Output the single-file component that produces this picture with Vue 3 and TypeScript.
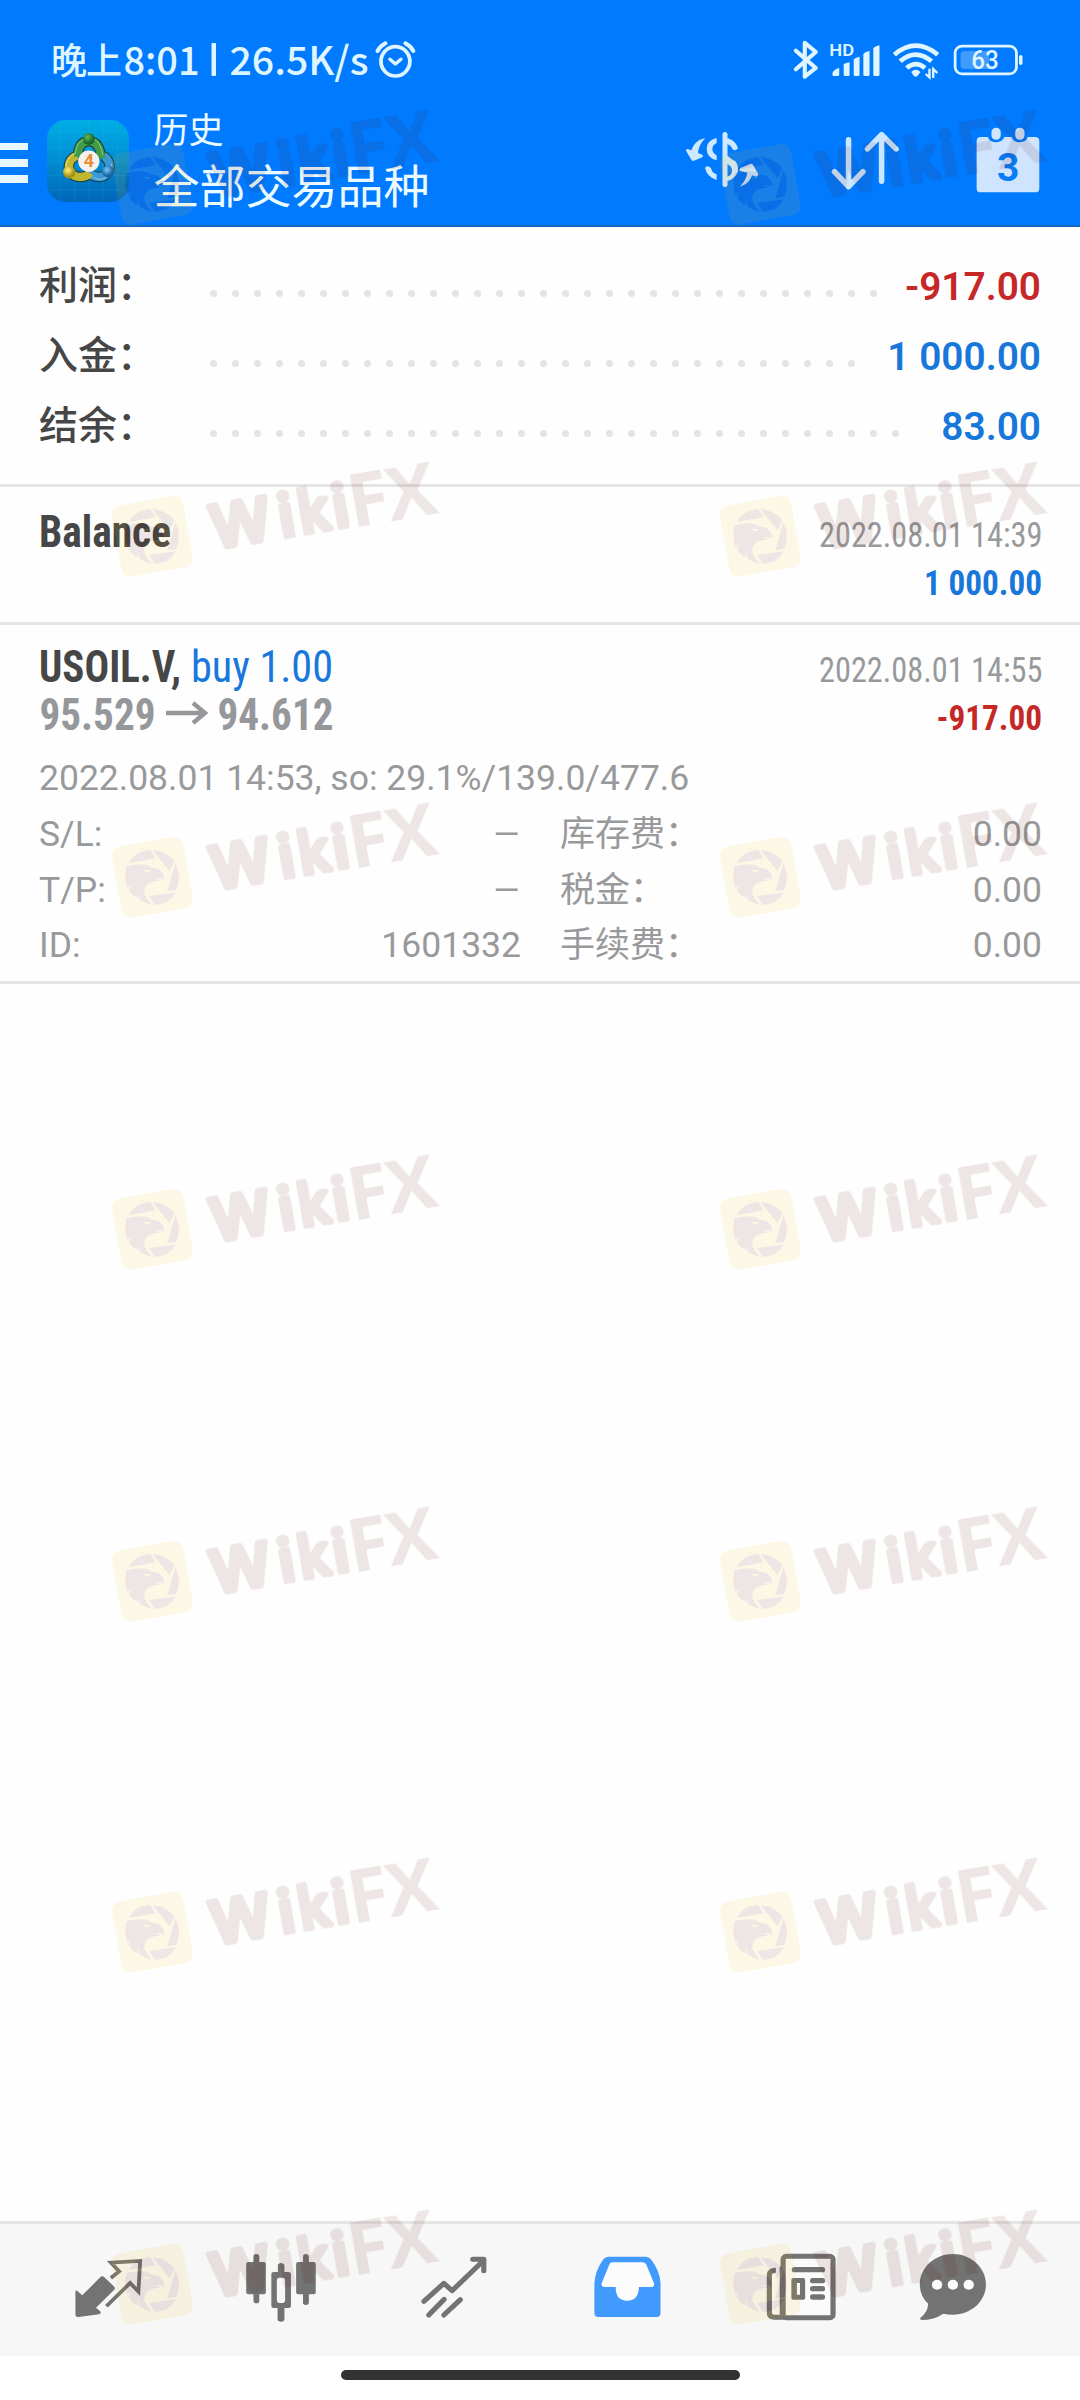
<script setup lang="ts">
interface SummaryRow { label: string; value: string; tone: 'red' | 'blue'; dots: number }
interface DetailRow { left: string; leftValue: string; right: string; rightValue: string }

const summary: SummaryRow[] = [
  { label: '利润：', value: '-917.00', tone: 'red', dots: 31 },
  { label: '入金：', value: '1 000.00', tone: 'blue', dots: 30 },
  { label: '结余：', value: '83.00', tone: 'blue', dots: 32 },
]

const details: DetailRow[] = [
  { left: 'S/L:', leftValue: '–', right: '库存费：', rightValue: '0.00' },
  { left: 'T/P:', leftValue: '–', right: '税金：', rightValue: '0.00' },
  { left: 'ID:', leftValue: '1601332', right: '手续费：', rightValue: '0.00' },
]

const markTops = [95.3, 447, 788, 1140, 1491.5, 1843, 2195]
const marks = markTops.flatMap((top) => [{ top, left: 100 }, { top, left: 708 }])
</script>

<template>
  <div class="screen">
    <header class="header">
      <div class="status">
        <svg class="clock" width="320" height="80" viewBox="0 0 320 80">
          <text x="0" y="73.5" class="cjk" textLength="71">晚上</text>
          <text x="72.500" y="74.500" class="lat" textLength="76" lengthAdjust="spacingAndGlyphs">8:01</text>
          <rect x="160.500" y="43" width="4.500" height="33" rx="1" />
          <text x="178.500" y="74.500" class="lat" textLength="139" lengthAdjust="spacingAndGlyphs">26.5K/s</text>
        </svg>
        <svg class="alarm" width="46" height="80" viewBox="1080 0 133.600 240" preserveAspectRatio="none" fill="none" stroke="#dff5ff" stroke-linecap="round">
          <ellipse cx="1148" cy="184" rx="42" ry="44" stroke-width="11" />
          <path d="M1132 178L1148 192L1164 178" stroke-width="10" stroke-linejoin="round" />
          <path d="M1096 153Q1104 138 1119 130M1200 153Q1192 138 1177 130" stroke-width="12" />
        </svg>
        <div class="indicators">
          <svg width="32" height="80" viewBox="726 0 93 240" preserveAspectRatio="none" fill="none" stroke="#dff5ff" stroke-width="12" stroke-linecap="round" stroke-linejoin="round">
            <path d="M743 152L801 204L769 230V128L801 156L743 208" />
          </svg>
          <svg width="54" height="80" viewBox="836.400 0 156.800 240" preserveAspectRatio="none" fill="#dff5ff">
            <text x="840" y="168" font-size="47" font-weight="600" class="hd" textLength="72" lengthAdjust="spacingAndGlyphs">HD</text>
            <path d="M849 224Q849 209 869 204V224Q869 228 865 228H853Q849 228 849 224ZM882 193Q888 189 899 187V224Q899 228 895 228H886Q882 228 882 224ZM911 178Q917 172 928 170V224Q928 228 924 228H915Q911 228 911 224ZM939 162Q945 155 957 153V224Q957 228 953 228H943Q939 228 939 224ZM968 144Q974 138 986 136V224Q986 228 982 228H972Q968 228 968 224Z" />
          </svg>
          <svg width="52" height="80" viewBox="1016.400 0 151 240" preserveAspectRatio="none" fill="none" stroke="#dff5ff" stroke-width="14">
            <path d="M1029 164Q1091 110 1155 164M1046 184Q1091 144 1137 184M1065 204Q1091 181 1118 204" />
            <path d="M1078 216Q1091 203 1105 216L1096 228Q1091 233 1086 228Z" fill="#dff5ff" stroke="none" />
            <path d="M1131 206V232L1120 222M1142 234V207L1154 219" stroke-width="7" />
          </svg>
          <svg width="72" height="80" viewBox="1196.400 0 209 240" preserveAspectRatio="none">
            <path d="M1234 153H1304V207H1234Q1221 207 1221 194V166Q1221 153 1234 153Z" fill="#409bff" />
            <rect x="1205.500" y="138.500" width="178" height="83" rx="20" fill="none" stroke="#dff5ff" stroke-width="8" />
            <rect x="1391" y="165" width="10" height="30" rx="5" fill="#dff5ff" />
            <text x="1252" y="208" font-size="76" font-weight="500" fill="#dff5ff" class="hd" textLength="80" lengthAdjust="spacingAndGlyphs">63</text>
          </svg>
        </div>
      </div>

      <div class="bar">
        <div class="menu"><i></i><i></i><i></i></div>
        <svg class="logo" width="82" height="82" viewBox="20 30 247 247" preserveAspectRatio="none">
          <defs>
            <linearGradient id="tile" x1="0" y1="0" x2="0" y2="1">
              <stop offset="0" stop-color="#00aee6" /><stop offset=".45" stop-color="#0090d4" /><stop offset="1" stop-color="#0065b8" />
            </linearGradient>
            <radialGradient id="gr" cx=".4" cy=".35"><stop offset="0" stop-color="#68b85c" /><stop offset="1" stop-color="#176a2c" /></radialGradient>
            <radialGradient id="ye" cx=".4" cy=".35"><stop offset="0" stop-color="#fff27a" /><stop offset="1" stop-color="#a79313" /></radialGradient>
            <radialGradient id="bl" cx=".4" cy=".35"><stop offset="0" stop-color="#7cc8ef" /><stop offset="1" stop-color="#1866a8" /></radialGradient>
          </defs>
          <rect x="20" y="30" width="247" height="247" rx="56" fill="url(#tile)" />
          <path d="M60 31V276M103 31V276M146 31V276M189 31V276M232 31V276M21 68H266M21 112H266M21 155H266M21 198H266M21 241H266" stroke="#5cc4f0" stroke-opacity=".2" stroke-width="2" />
          <g fill="none" stroke-width="31" stroke="#123c3c">
            <path d="M190 138C212 152 212 178 202 190C188 208 160 204 138 186" />
            <path d="M112 138C86 144 80 172 91 188C104 206 136 206 150 190" />
            <path d="M114 140C112 112 124 94 146 94S182 112 182 146" />
          </g>
          <g fill="none" stroke-width="25">
            <path d="M190 138C212 152 212 178 202 190C188 208 160 204 138 186" stroke="#3b98d3" />
            <path d="M112 138C86 144 80 172 91 188C104 206 136 206 150 190" stroke="#c0b62f" />
            <path d="M114 140C112 112 124 94 146 94S182 112 182 146" stroke="#429b45" />
          </g>
          <g fill="none" stroke-width="3" stroke-opacity=".75">
            <path d="M105 132C108 102 122 88 146 86S182 102 188 136" stroke="#a5d9a0" />
            <path d="M104 132C76 144 72 174 84 194" stroke="#f3ecaa" />
            <path d="M214 162Q216 184 200 200T160 203" stroke="#a8dcfa" />
          </g>
          <circle cx="146" cy="87" r="18" fill="url(#gr)" />
          <circle cx="87" cy="187" r="19" fill="url(#ye)" />
          <circle cx="204" cy="185" r="18" fill="url(#bl)" />
          <circle cx="146" cy="154" r="32" fill="#f4f1ee" />
          <text x="146" y="173" text-anchor="middle" font-size="54" font-weight="700" fill="#f08a35" class="hd">4</text>
        </svg>
        <div class="titles">
          <div class="sub">历史</div>
          <div class="title">全部交易品种</div>
        </div>
        <div class="actions">
          <svg width="90" height="80" viewBox="0 0 270 240" fill="#cde8ff">
            <path d="M76 55C62 68 56 84 54 99L68 105Q70 109 67 112L40 123Q36 123 34 119L18 92Q18 86 22 87L34 91C42 70 56 57 76 55Z" />
            <path d="M110 54V69Q97 75 97 87T110 106V121Q80 113 80 87T110 54ZM75 143Q83 134 93 144Q95 158 110 163V180Q80 170 75 143Z" />
            <rect x="127.500" y="36" width="15" height="165" rx="7" />
            <path d="M140 54C158 58 170 70 174 85Q166 96 157 87Q153 75 140 72ZM140 106Q154 118 166 124Q175 135 174 153Q166 177 140 184V170Q156 167 156 152T140 132Z" />
            <path d="M179 200C192 188 200 173 202 158L181 153Q176 148 181 144L213 131Q217 131 219 134L235 163Q234 170 229 170L216 166C210 184 198 195 179 200Z" />
          </svg>
          <svg width="100" height="80" viewBox="813.100 360 290.400 240" preserveAspectRatio="none" fill="none" stroke="#cde6ff" stroke-width="16" stroke-linecap="round" stroke-linejoin="round">
            <path d="M896 419V560M855 515L896 560L938 515M992 544V404M951 447L992 404L1034 447" />
          </svg>
          <svg width="80" height="80" viewBox="1234.200 360 232.300 240" preserveAspectRatio="none" fill="#cfe4ff">
            <path d="M1280 411H1301Q1303 426 1324 427Q1344 426 1348 411H1370Q1373 426 1393 427Q1414 426 1416 411H1438Q1450 411 1450 423V566Q1450 577 1438 577H1280Q1268 577 1268 566V423Q1268 411 1280 411Z" />
            <rect x="1311" y="383" width="27" height="36" rx="13" /><rect x="1380" y="383" width="27" height="36" rx="13" />
            <text x="1327" y="542" textLength="65" lengthAdjust="spacingAndGlyphs" font-size="119" font-weight="700" fill="#087cf5" class="hd">3</text>
          </svg>
        </div>
      </div>
    </header>

    <section class="summary">
      <div v-for="row in summary" :key="row.label" class="sum-row">
        <span class="sum-label">{{ row.label }}</span>
        <span class="dots"><i v-for="n in row.dots" :key="n"></i></span>
        <span class="sum-value" :class="row.tone">{{ row.value }}</span>
      </div>
    </section>

    <section class="entry first">
      <div class="lines">
        <svg class="cond" width="300" height="48"><text x="-1" y="38" font-size="43.500" font-weight="700" fill="#464646" textLength="132" lengthAdjust="spacingAndGlyphs">Balance</text></svg>
        <svg class="cond" width="240" height="48"><text x="19" y="37.500" font-size="35.500" fill="#98999b" textLength="223.500" lengthAdjust="spacingAndGlyphs">2022.08.01 14:39</text></svg>
      </div>
      <div class="lines end">
        <svg class="cond" width="240" height="48"><text x="124" y="38" font-size="35.500" font-weight="700" fill="#1877db" textLength="118" lengthAdjust="spacingAndGlyphs">1 000.00</text></svg>
      </div>
    </section>

    <section class="entry deal">
      <div class="lines">
        <svg class="cond" width="320" height="48">
          <text x="-1" y="38" font-size="43.500" font-weight="700" fill="#464646" textLength="142" lengthAdjust="spacingAndGlyphs">USOIL.V,</text>
          <text x="151" y="38" font-size="43.500" fill="#1877db" textLength="142" lengthAdjust="spacingAndGlyphs">buy 1.00</text>
        </svg>
        <svg class="cond" width="240" height="48"><text x="19" y="37.500" font-size="35.500" fill="#98999b" textLength="223.500" lengthAdjust="spacingAndGlyphs">2022.08.01 14:55</text></svg>
      </div>
      <div class="lines">
        <svg class="cond" width="320" height="48">
          <text x="-0.500" y="38" font-size="43.500" font-weight="700" fill="#96979a" textLength="116" lengthAdjust="spacingAndGlyphs">95.529</text>
          <path d="M126 21H165M153 11L165 21L153 31" fill="none" stroke="#96979a" stroke-width="4.300" />
          <text x="177.500" y="38" font-size="43.500" font-weight="700" fill="#96979a" textLength="116" lengthAdjust="spacingAndGlyphs">94.612</text>
        </svg>
        <svg class="cond" width="240" height="48"><text x="136.500" y="38" font-size="35.500" font-weight="700" fill="#c62828" textLength="105.500" lengthAdjust="spacingAndGlyphs">-917.00</text></svg>
      </div>
      <div class="comment">2022.08.01 14:53, so: 29.1%/139.0/477.6</div>
      <div v-for="d in details" :key="d.left" class="detail">
        <div class="cell left"><span>{{ d.left }}</span><span :class="{ dash: d.leftValue === '–' }">{{ d.leftValue }}</span></div>
        <div class="cell right"><span class="cn">{{ d.right }}</span><span>{{ d.rightValue }}</span></div>
      </div>
    </section>

    <nav class="nav">
      <svg viewBox="139.400 72 348.500 396" preserveAspectRatio="none" fill="#737373">
        <path d="M219 273Q221 269 228 276L239 286L291 232Q297 226 303 232L332 260Q336 265 331 270L279 323L291 334Q295 342 287 343L229 351Q219 352 219 345Z" />
        <path d="M322 234L346 214L322 188L407 183L402 275L378 249L309 319" fill="none" stroke="#737373" stroke-width="11" />
      </svg>
      <svg viewBox="641.800 72 348.500 396" preserveAspectRatio="none" fill="#737373">
        <path d="M736 186V170Q736 162 744.500 162T753 170V186H766Q772 186 772 192V277Q772 283 766 283H753V302Q753 310 744.500 310T736 302V283H722Q715 283 715 277V192Q715 186 722 186ZM880 186V170Q880 162 888 162T897 170V186H911Q917 186 917 192V277Q917 283 911 283H897V307Q897 315 888 315T880 307V283H866Q860 283 860 277V192Q860 186 866 186Z" />
        <path fill-rule="evenodd" d="M807 216V197Q807 189 816 189T826 197V216H838Q845 216 845 222V318Q845 324 838 324H826V357Q826 365 816 365T806 357V324H795Q788 324 788 318V222Q788 216 795 216ZM810 233Q804 233 804 241V301Q804 309 810 309H822Q828 309 828 301V241Q828 233 822 233Z" />
      </svg>
      <svg viewBox="1144.200 72 348.500 396" preserveAspectRatio="none" fill="none" stroke="#737373" stroke-width="15" stroke-linecap="round">
        <path d="M1231 304L1289 250L1313 272L1405 181M1373 178H1405V212" stroke-linejoin="round" />
        <path d="M1245 345L1290 298M1289 345L1337 299" stroke-width="15" />
      </svg>
      <svg viewBox="78.400 72 348.500 396" preserveAspectRatio="none">
        <path fill="#419bfe" d="M158 250Q160 212 184 178Q189 170 199 170H307Q317 170 322 178Q348 212 350 250V339Q350 351 338 351H170Q158 351 158 339Z" />
        <path fill="#fcfcfc" d="M201 194Q203 187 212 187H296Q306 187 309 194L331 250Q333 261 323 261H287Q287 302 253 302T220 261H188Q177 261 179 250Z" />
      </svg>
      <svg viewBox="580.800 72 348.500 396" preserveAspectRatio="none">
        <rect x="706" y="169" width="145" height="184" rx="9" fill="#fbfbfb" stroke="#737373" stroke-width="15" />
        <path d="M666 352V228Q666 211 684 211V352Z" fill="#fbfbfb" />
        <path d="M685 211Q666 211 666 226V337Q666 352 681 352H709" fill="none" stroke="#737373" stroke-width="15" />
        <path d="M698 200V344" stroke="#737373" stroke-width="4" />
        <path d="M739 209H820M792 242H820M792 266H820M792 291H820" stroke="#737373" stroke-width="16" stroke-linecap="round" />
        <path fill="#737373" fill-rule="evenodd" d="M735 234H765Q770 234 770 240V294Q770 299 765 299H735Q730 299 730 294V240Q730 234 735 234ZM746 249V284H755V249Z" />
      </svg>
      <svg viewBox="1083.200 72 348.500 396" preserveAspectRatio="none">
        <path fill="#737373" d="M1199 162C1252 162 1295 203 1295 253C1295 304 1252 344 1199 344Q1184 344 1171 341Q1144 360 1108 360Q1102 359 1105 353Q1127 335 1127 311Q1103 288 1103 253C1103 203 1146 162 1199 162Z" />
        <g fill="#fbfbfb"><circle cx="1153" cy="254" r="15" /><circle cx="1199" cy="254" r="15" /><circle cx="1245" cy="254" r="15" /></g>
      </svg>
    </nav>
    <div class="home"><i></i></div>

    <div class="marks">
      <svg v-for="(m, i) in marks" :key="i" class="mark" :style="{ left: m.left + 'px', top: m.top + 'px' }" width="360" height="140" viewBox="0 0 1080 420">
        <g opacity=".1">
          <g transform="translate(15 120)">
            <rect x="33.500" y="39.500" width="217" height="217" rx="28" transform="rotate(-10 142 148)" fill="#f0b80c" />
            <g fill="#500f08">
              <path d="M72 105Q92 68 135 66L152 91ZM142 66Q185 70 208 100L194 130ZM211 106Q231 144 214 186L187 190ZM213 193Q190 231 150 230L132 204Z" />
              <path d="M64 115Q100 105 130 112Q138 121 152 121C168 124 178 140 178 155Q168 147 150 152Q162 154 165 158C140 159 122 166 118 183C115 204 130 216 140 229Q118 226 103 214L99 190L98 211Q80 202 72 187L79 168L68 180Q56 155 64 115ZM115 125Q123 136 133 131L136 127Z" fill-rule="evenodd" />
            </g>
          </g>
          <g transform="translate(388 307) rotate(-9.800)" fill="#500f08" class="mark-text">
            <g stroke="#500f08" stroke-width="17" stroke-linejoin="round">
              <text x="-41" y="-8" font-size="180" textLength="174" lengthAdjust="spacingAndGlyphs">W</text>
              <text x="160" y="-8" font-size="176">i</text>
              <text x="222" y="-8" font-size="176" textLength="92" lengthAdjust="spacingAndGlyphs">k</text>
              <text x="325" y="-8" font-size="176">i</text>
            </g>
            <text x="374" y="0" font-size="218" font-weight="700" textLength="124" lengthAdjust="spacingAndGlyphs">F</text>
            <text x="492" y="0" font-size="218" font-weight="700" textLength="149" lengthAdjust="spacingAndGlyphs">X</text>
          </g>
        </g>
      </svg>
    </div>
  </div>
</template>

<style>
body { margin: 0; background: #fff; }
</style>

<style scoped>
.screen { position: relative; width: 1080px; height: 2400px; overflow: hidden; display: flex; flex-direction: column; background: #fefefe; font-family: Roboto, "Noto Sans CJK SC", sans-serif; }
svg { display: block; flex: none; overflow: visible; }
i { display: block; flex: none; }
.header { height: 225px; background: #007aff; border-bottom: 2px solid #1769c0; }
.status { display: flex; height: 80px; padding-left: 51px; }
.clock { fill: #dff5ff; }
.cjk { font: 500 36px "Noto Sans CJK SC", sans-serif; }
.lat { font: 500 39px "Noto Sans CJK SC", sans-serif; }
.hd { font-family: Roboto, sans-serif; }
.alarm { margin-left: 1px; }
.indicators { display: flex; margin-left: auto; padding-right: 56px; }
.indicators svg:nth-child(2) { margin-left: 6px; }
.indicators svg:nth-child(3) { margin-left: 8px; }
.indicators svg:nth-child(4) { margin-left: 10px; }
.bar { display: flex; align-items: flex-start; height: 145px; }
.menu { display: flex; flex-direction: column; gap: 8.5px; padding-top: 62.5px; }
.menu i { width: 27.5px; height: 7.8px; background: #e8f8ff; }
.logo { margin: 40px 0 0 19px; }
.titles { display: flex; flex-direction: column; padding-top: 27px; margin-left: 25px; color: #ebfbff; white-space: nowrap; }
.sub { font-size: 35px; line-height: 50px; }
.title { font-size: 46px; line-height: 60px; }
.actions { display: flex; margin-left: auto; padding: 40px 35px 0 0; }
.actions svg:nth-child(2) { margin-left: 50px; }
.actions svg:nth-child(3) { margin-left: 45px; }

.summary { padding: 25px 39px 22px; border-bottom: 3px solid #e5e5e5; }
.sum-row { display: flex; align-items: center; height: 70px; font-size: 39px; font-weight: 500; line-height: 70px; }
.sum-label { width: 171px; height: 71px; line-height: 69px; color: #464646; white-space: nowrap; }
.dots { display: flex; gap: 15px; margin-top: 13px; }
.dots i { width: 7px; height: 7px; border-radius: 50%; background: #e4e4e4; }
.sum-value { margin-left: auto; font-weight: 600; font-size: 38.8px; white-space: pre; }
.red { color: #c62828; }
.blue { color: #1877db; }

.entry { border-bottom: 3px solid #e5e5e5; padding: 0 40px; }
.first { height: 113px; padding-top: 22px; }
.deal { padding-top: 19px; height: 337px; }
.lines { display: flex; justify-content: space-between; height: 48px; }
.end { justify-content: flex-end; }
.cond { font-family: "Roboto Condensed", Roboto, sans-serif; }
.comment { margin: 10px 0 1px -1px; font-size: 35.5px; line-height: 56px; color: #98999b; white-space: nowrap; }
.detail { display: flex; gap: 39px; height: 55.5px; margin: 0 -2px 0 -1px; font-size: 35.5px; line-height: 55.5px; color: #98999b; }
.cell { display: flex; justify-content: space-between; white-space: nowrap; }
.left { width: 482px; }
.right { width: 482px; }
.cn { font-size: 35px; }
.dash { transform: scaleX(1.25); transform-origin: right; }

.nav { display: flex; gap: 53px; margin-top: auto; padding-left: 48px; height: 132px; background: #f7f7f7; border-top: 3px solid #e5e5e5; }
.nav svg { width: 120px; height: 132px; }
.home { display: flex; justify-content: center; height: 30px; padding-top: 14px; background: #fff; }
.home i { width: 399px; height: 10px; border-radius: 5px; background: #323232; }

.marks { position: absolute; inset: 0; pointer-events: none; }
.mark { position: absolute; overflow: visible; }
.mark-text { font-family: "Open Sans", sans-serif; font-weight: 600; }
</style>
